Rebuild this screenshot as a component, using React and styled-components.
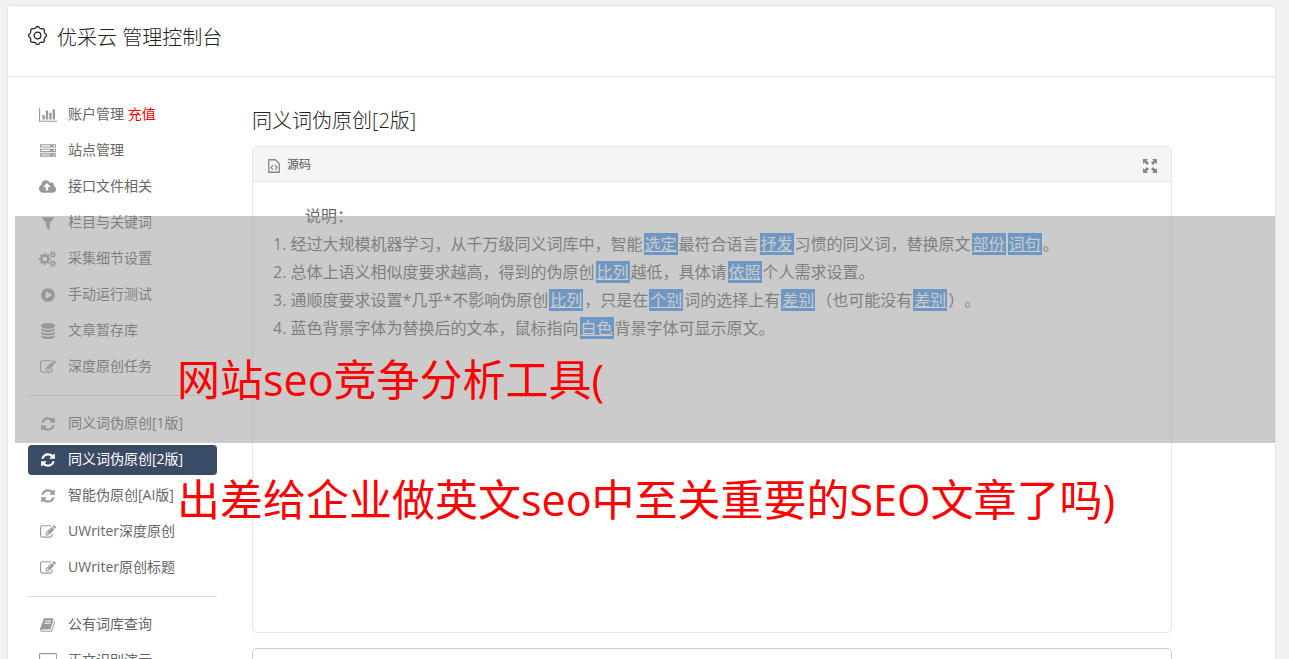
import React, { useState } from "react";
import styled, { createGlobalStyle } from "styled-components";

const icons = {
  chart: {
    width: 2048,
    d: "M640 896v512h-256v-512h256zm384-512v1024h-256v-1024h256zm1024 1152v128h-2048v-1536h128v1408h1920zm-640-896v768h-256v-768h256zm384-384v1152h-256v-1152h256z",
  },
  server: {
    width: 1792,
    d: "M128 1408h1024v-128h-1024v128zm0-512h1024v-128h-1024v128zm1568 448q0-40-28-68t-68-28-68 28-28 68 28 68 68 28 68-28 28-68zm-1568-960h1024v-128h-1024v128zm1568 448q0-40-28-68t-68-28-68 28-28 68 28 68 68 28 68-28 28-68zm0-512q0-40-28-68t-68-28-68 28-28 68 28 68 68 28 68-28 28-68zm96 832v384h-1792v-384h1792zm0-512v384h-1792v-384h1792zm0-512v384h-1792v-384h1792z",
  },
  upload: {
    width: 1920,
    d: "M1280 864q0-14-9-23l-352-352q-9-9-23-9t-23 9l-351 351q-10 12-10 24 0 14 9 23t23 9h224v352q0 13 9.5 22.5t22.5 9.5h192q13 0 22.5-9.5t9.5-22.5v-352h224q13 0 22.5-9.5t9.5-22.5zm640 288q0 159-112.5 271.5t-271.5 112.5h-1088q-185 0-316.5-131.5t-131.5-316.5q0-130 70-240t188-165q-2-30-2-43 0-212 150-362t362-150q156 0 285.5 87t188.5 231q71-62 166-62 106 0 181 75t75 181q0 76-41 138 130 31 213.5 135.5t83.5 238.5z",
  },
  filter: {
    width: 1792,
    d: "M1595 295q17 41-14 70l-493 493v742q0 42-39 59-13 5-25 5-27 0-45-19l-256-256q-19-19-19-45v-486l-493-493q-31-29-14-70 17-39 59-39h1280q42 0 59 39z",
  },
  cogs: {
    width: 1920,
    d: "M896 896q0-106-75-181t-181-75-181 75-75 181 75 181 181 75 181-75 75-181zm768 512q0-52-38-90t-90-38-90 38-38 90q0 53 37.5 90.5t90.5 37.5 90.5-37.5 37.5-90.5zm0-1024q0-52-38-90t-90-38-90 38-38 90q0 53 37.5 90.5t90.5 37.5 90.5-37.5 37.5-90.5zm-384 421v185q0 10-7 19.5t-16 10.5l-155 24q-11 35-32 76 34 48 90 115 7 11 7 20 0 12-7 19-23 30-82.5 89.5t-78.5 59.5q-11 0-21-7l-115-90q-37 19-77 31-11 108-23 155-7 24-30 24h-186q-11 0-20-7.5t-10-17.5l-23-153q-34-10-75-31l-118 89q-7 7-20 7-11 0-21-8-144-133-144-160 0-9 7-19 10-14 41-53t47-61q-23-44-35-82l-152-24q-10-1-17-9.5t-7-19.5v-185q0-10 7-19.5t16-10.5l155-24q11-35 32-76-34-48-90-115-7-11-7-20 0-12 7-20 22-30 82-89t79-59q11 0 21 7l115 90q34-18 77-32 11-108 23-154 7-24 30-24h186q11 0 20 7.5t10 17.5l23 153q34 10 75 31l118-89q8-7 20-7 11 0 21 8 144 133 144 160 0 8-7 19-12 16-42 54t-45 60q23 48 34 82l152 23q10 2 17 10.5t7 19.5zm640 533v140q0 16-149 31-12 27-30 52 51 113 51 138 0 4-4 7-122 71-124 71-8 0-46-47t-52-68q-20 2-30 2t-30-2q-14 21-52 68t-46 47q-2 0-124-71-4-3-4-7 0-25 51-138-18-25-30-52-149-15-149-31v-140q0-16 149-31 13-29 30-52-51-113-51-138 0-4 4-7 4-2 35-20t59-34 30-16q8 0 46 46.5t52 67.5q20-2 30-2t30 2q51-71 92-112l6-2q4 0 124 70 4 3 4 7 0 25-51 138 17 23 30 52 149 15 149 31zm0-1024v140q0 16-149 31-12 27-30 52 51 113 51 138 0 4-4 7-122 71-124 71-8 0-46-47t-52-68q-20 2-30 2t-30-2q-14 21-52 68t-46 47q-2 0-124-71-4-3-4-7 0-25 51-138-18-25-30-52-149-15-149-31v-140q0-16 149-31 13-29 30-52-51-113-51-138 0-4 4-7 4-2 35-20t59-34 30-16q8 0 46 46.5t52 67.5q20-2 30-2t30 2q51-71 92-112l6-2q4 0 124 70 4 3 4 7 0 25-51 138 17 23 30 52 149 15 149 31z",
  },
  play: {
    width: 1792,
    d: "M896 128q209 0 385.5 103t279.5 279.5 103 385.5-103 385.5-279.5 279.5-385.5 103-385.5-103-279.5-279.5-103-385.5 103-385.5 279.5-279.5 385.5-103zm384 823q32-18 32-55t-32-55l-544-320q-31-19-64-1-32 19-32 56v640q0 37 32 56 16 8 32 8 17 0 32-9z",
  },
  database: {
    width: 1792,
    d: "M896 768q237 0 443-43t325-127v170q0 69-103 128t-280 93.5-385 34.5-385-34.5-280-93.5-103-128v-170q119 84 325 127t443 43zm0 768q237 0 443-43t325-127v170q0 69-103 128t-280 93.5-385 34.5-385-34.5-280-93.5-103-128v-170q119 84 325 127t443 43zm0-384q237 0 443-43t325-127v170q0 69-103 128t-280 93.5-385 34.5-385-34.5-280-93.5-103-128v-170q119 84 325 127t443 43zm0-1152q208 0 385 34.5t280 93.5 103 128v128q0 69-103 128t-280 93.5-385 34.5-385-34.5-280-93.5-103-128v-128q0-69 103-128t280-93.5 385-34.5z",
  },
  edit: {
    width: 1792,
    d: "M888 1184l116-116-152-152-116 116v56h96v96h56zm440-720q-16-16-33 1l-350 350q-17 17-1 33t33-1l350-350q17-17 1-33zm80 594v190q0 119-84.5 203.5t-203.5 84.5h-832q-119 0-203.5-84.5t-84.5-203.5v-832q0-119 84.5-203.5t203.5-84.5h832q63 0 117 25 15 7 18 23 3 17-9 29l-49 49q-14 14-32 8-23-6-45-6h-832q-66 0-113 47t-47 113v832q0 66 47 113t113 47h832q66 0 113-47t47-113v-126q0-13 9-22l64-64q15-15 35-7t20 29zm-96-738l288 288-672 672h-288v-288zm444 132l-92 92-288-288 92-92q28-28 68-28t68 28l152 152q28 28 28 68t-28 68z",
  },
  refresh: {
    width: 1792,
    d: "M1639 1056q0 5-1 7-64 268-268 434.5t-478 166.5q-146 0-282.5-55t-243.5-157l-129 129q-19 19-45 19t-45-19-19-45v-448q0-26 19-45t45-19h448q26 0 45 19t19 45-19 45l-137 137q71 66 161 102t187 36q134 0 250-65t186-179q11-17 53-117 8-23 30-23h192q13 0 22.5 9.5t9.5 22.5zm25-800v448q0 26-19 45t-45 19h-448q-26 0-45-19t-19-45 19-45l138-138q-148-137-349-137-134 0-250 65t-186 179q-11 17-53 117-8 23-30 23h-199q-13 0-22.5-9.5t-9.5-22.5v-7q65-268 270-434.5t480-166.5q146 0 284 55.5t245 156.5l130-129q19-19 45-19t45 19 19 45z",
  },
  book: {
    width: 1792,
    d: "M1639 478q40 57 18 129l-275 906q-19 64-76.5 107.5t-122.5 43.5h-923q-77 0-148.5-53.5t-99.5-131.5q-24-67-2-127 0-4 3-27t4-37q1-8-3-21.5t-3-19.5q2-11 8-21t16.5-23.5 16.5-23.5q23-38 45-91.5t30-91.5q3-10 .5-30t-.5-28q3-11 17-28t17-23q21-36 42-92t25-90q1-9-2.5-32t.5-28q4-13 22-30.5t22-22.5q19-26 42.5-84.5t27.5-96.5q1-8-3-25.5t-2-26.5q2-8 9-18t18-23 17-21q8-12 16.5-30.5t15-35 16-36 19.5-32 26.5-23.5 36-11.5 47.5 5.5l-1 3q38-9 51-9h761q74 0 114 56t18 130l-274 906q-36 119-71.5 153.5t-128.5 34.5h-869q-27 0-38 15-11 16-1 43 24 70 144 70h923q29 0 56-15.5t35-41.5l300-987q7-22 5-57 38 15 59 43zm-1064 2q-4 13 2 22.5t20 9.5h608q13 0 25.5-9.5t16.5-22.5l21-64q4-13-2-22.5t-20-9.5h-608q-13 0-25.5 9.5t-16.5 22.5zm-83 256q-4 13 2 22.5t20 9.5h608q13 0 25.5-9.5t16.5-22.5l21-64q4-13-2-22.5t-20-9.5h-608q-13 0-25.5 9.5t-16.5 22.5z",
  },
  desktop: {
    width: 2048,
    d: "M160 0h1728q160 0 160 160v1088q0 160-160 160h-544v128h-640v-128h-544q-160 0-160-160v-1088q0-160 160-160zm0 128q-32 0-32 32v832h1792v-832q0-32-32-32z",
  },
};

const menu = [
  [
    { icon: "chart", text: "账户管理", extra: "充值" },
    { icon: "server", text: "站点管理" },
    { icon: "upload", text: "接口文件相关" },
    { icon: "filter", text: "栏目与关键词" },
    { icon: "cogs", text: "采集细节设置" },
    { icon: "play", text: "手动运行测试" },
    { icon: "database", text: "文章暂存库" },
    { icon: "edit", text: "深度原创任务" },
  ],
  [
    { icon: "refresh", text: "同义词伪原创[1版]" },
    { icon: "refresh", text: "同义词伪原创[2版]", active: true },
    { icon: "refresh", text: "智能伪原创[AI版]" },
    { icon: "edit", text: "UWriter深度原创" },
    { icon: "edit", text: "UWriter原创标题" },
  ],
  [
    { icon: "book", text: "公有词库查询" },
    { icon: "desktop", text: "正文识别演示" },
  ],
];

const MenuIcon = ({ name }) => (
  <IconBox>
    <svg
      width={icons[name].width / 112}
      height="16"
      viewBox={`0 0 ${icons[name].width} 1792`}
      fill="currentColor"
      fillRule="evenodd"
      aria-hidden="true"
    >
      <path d={icons[name].d} />
    </svg>
  </IconBox>
);

// gear outline with eight rounded teeth
const gearPath = () => {
  let d = "";
  for (let i = 0; i <= 96; i++) {
    const a = (i / 96) * Math.PI * 2;
    const wave = Math.tanh(2 * Math.cos(a * 8)) / Math.tanh(2);
    const r = 7.8 + 0.6 * wave;
    d += `${i ? "L" : "M"}${(9 + r * Math.sin(a)).toFixed(2)} ${(9 - r * Math.cos(a)).toFixed(2)}`;
  }
  return d + "Z";
};

const App = () => {
  const [text, setText] = useState("");

  return (
    <Page>
      <GlobalStyle />
      <Panel>
        <Header>
          <svg width="19" height="19" viewBox="0 0 18 18" fill="none" stroke="currentColor" aria-hidden="true">
            <path d={gearPath()} strokeWidth="1.2" />
            <circle cx="9" cy="9" r="3.2" strokeWidth="1.2" />
          </svg>
          <Title>优采云 管理控制台</Title>
        </Header>
        <Body>
          <Sidebar>
            {menu.map((group, i) => (
              <MenuGroup key={i}>
                {group.map((item) => (
                  <li key={item.text}>
                    <MenuLink href="#" $active={item.active}>
                      <MenuIcon name={item.icon} />
                      <span>
                        {item.text}
                        {item.extra ? <Recharge> {item.extra}</Recharge> : null}
                      </span>
                    </MenuLink>
                  </li>
                ))}
              </MenuGroup>
            ))}
          </Sidebar>
          <Main>
            <Heading>同义词伪原创[2版]</Heading>
            <Editor>
              <Toolbar>
                <ToolButton>
                  <svg width="12" height="14" viewBox="0 0 12 14" fill="none" stroke="#888" aria-hidden="true">
                    <path d="M.75.75h6.5l4 3.7v8.8H.75z" strokeWidth="1.3" />
                    <path d="M5 6.2L3 8.5l2 2.3M7 6.2l2 2.3-2 2.3" strokeWidth="1.2" />
                  </svg>
                  源码
                </ToolButton>
                <ToolButton aria-label="全屏">
                  <svg width="14" height="14" viewBox="0 0 14 14" fill="#888" aria-hidden="true">
                    <path d="M0 0h5L3.5 1.5 6 4 4 6 1.5 3.5 0 5zM14 0v5l-1.5-1.5L10 6 8 4l2.5-2.5L9 0zM0 14V9l1.5 1.5L4 8l2 2-2.5 2.5L5 14zM14 14H9l1.5-1.5L8 10l2-2 2.5 2.5L14 9z" />
                  </svg>
                </ToolButton>
              </Toolbar>
              <Content>
                <Intro>说明：</Intro>
                <List>
                  <li>
                    经过大规模机器学习，从千万级同义词库中，智能<Word>选定</Word>最符合语言<Word>抒发</Word>习惯的同义词，替换原文<Word>部份</Word><Word>词句</Word>。
                  </li>
                  <li>
                    总体上语义相似度要求越高，得到的伪原创<Word>比列</Word>越低，具体请<Word>依照</Word>个人需求设置。
                  </li>
                  <li>
                    通顺度要求设置*几乎*不影响伪原创<Word>比列</Word>，只是在<Word>个别</Word>词的选择上有<Word>差别</Word>（也可能没有<Word>差别</Word>）。
                  </li>
                  <li>
                    蓝色背景字体为替换后的文本，鼠标指向<Word>白色</Word>背景字体可显示原文。
                  </li>
                </List>
              </Content>
            </Editor>
            <Source
              aria-label="原文"
              value={text}
              onChange={(event) => setText(event.target.value)}
            />
          </Main>
        </Body>
      </Panel>
      <Shade />
      <Caption>
        <p>网站seo竞争分析工具(</p>
        <p>出差给企业做英文seo中至关重要的SEO文章了吗)</p>
      </Caption>
    </Page>
  );
};

const GlobalStyle = createGlobalStyle`
  * {
    box-sizing: border-box;
  }

  html {
    scrollbar-width: none;
  }

  body {
    margin: 0;
    background: #f1f1f1;
    color: #666;
    font-family: "Open Sans", "Noto Sans CJK SC", sans-serif;
    font-size: 14px;
    text-spacing-trim: space-all;
  }

  p, h1, h2, ul, ol {
    margin: 0;
    padding: 0;
    font-weight: normal;
  }
`;

const Page = styled.div`
  position: relative;
  padding: 5px 13px 0 7px;
`;

const Panel = styled.div`
  background: white;
  border: 1px solid #e5e5e5;
  border-radius: 4px;
`;

const Header = styled.header`
  display: flex;
  align-items: flex-start;
  gap: 10px;
  height: 71px;
  padding: 20px 20px 0;
  border-bottom: 1px solid #e5e5e5;
  color: #222;
`;

const Title = styled.h1`
  font-size: 20px;
  line-height: 24px;
  font-weight: 300;
`;

const Body = styled.div`
  display: flex;
  gap: 35px;
  padding: 23px 20px;
`;

const Sidebar = styled.nav`
  flex: 0 0 189px;
`;

const MenuGroup = styled.ul`
  display: grid;
  gap: 6px;
  list-style: none;

  & + & {
    margin-top: 13px;
    padding-top: 13px;
    border-top: 1px solid #ddd;
  }
`;

const MenuLink = styled.a`
  display: flex;
  align-items: flex-start;
  gap: 10px;
  height: 30px;
  padding-left: 10px;
  border-radius: 4px;
  line-height: 28px;
  text-decoration: none;
  white-space: nowrap;
  color: ${(props) => (props.$active ? "white" : "#666")};
  background: ${(props) => (props.$active ? "#3a4b66" : "none")};

  svg {
    color: ${(props) => (props.$active ? "white" : "#999")};
  }
`;

const IconBox = styled.span`
  display: flex;
  align-items: center;
  justify-content: center;
  width: 20px;
  height: 30px;
`;

const Recharge = styled.span`
  color: red;
`;

const Main = styled.main`
  flex: 1;
  max-width: 920px;
`;

const Heading = styled.h2`
  padding-top: 6px;
  font-size: 20px;
  line-height: 30px;
  color: #222;
  font-weight: 300;
`;

const Editor = styled.section`
  margin-top: 10px;
  border: 1px solid #e5e5e5;
  border-radius: 4px;
`;

const Toolbar = styled.div`
  display: flex;
  justify-content: space-between;
  height: 35px;
  padding: 0 14px 0 15px;
  background: #f5f5f5;
  border-bottom: 1px solid #e5e5e5;
`;

const ToolButton = styled.button`
  display: flex;
  align-items: center;
  gap: 7px;
  padding: 0;
  border: 0;
  background: none;
  color: #555;
  font: inherit;
  font-size: 12px;

  svg {
    margin-top: 4px;
  }
`;

const Content = styled.div`
  min-height: 450px;
  padding: 20px;
  font-size: 16px;
  line-height: 28px;
`;

const Intro = styled.p`
  text-indent: 2em;
`;

const List = styled.ol`
  list-style-position: inside;
`;

const Word = styled.u`
  margin: 0 1px;
  padding: 0 1px;
  background: #4499ee;
  color: white;
`;

const Source = styled.textarea`
  display: block;
  width: 100%;
  height: 120px;
  margin-top: 15px;
  border: 1px solid #ccc;
  border-radius: 4px;
  resize: none;
`;

const Shade = styled.div`
  position: absolute;
  top: 216px;
  left: 15px;
  right: 14px;
  height: 227px;
  background: rgba(151, 151, 151, 0.5);
  pointer-events: none;
`;

const Caption = styled.div`
  position: absolute;
  top: 320px;
  left: 177px;
  font-size: 43px;
  line-height: 120px;
  white-space: nowrap;
  color: red;
  pointer-events: none;
`;

export default App;
